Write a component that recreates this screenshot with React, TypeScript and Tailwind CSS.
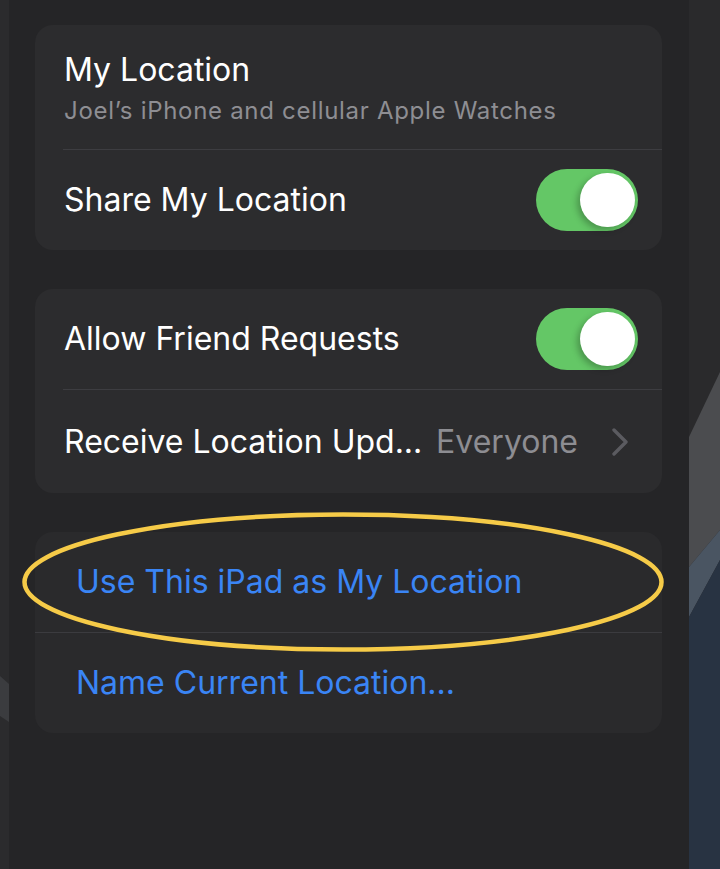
import React from "react";

function Toggle() {
  return (
    <div className="relative w-[102px] h-[62px] rounded-full bg-[#64c766] shrink-0">
      <div className="absolute right-[3px] top-[4px] w-[55px] h-[54px] rounded-full bg-white shadow-[-3px_3px_6px_rgba(0,0,0,0.25)]" />
    </div>
  );
}

function Chevron() {
  return (
    <svg width="18" height="28" viewBox="0 0 18 28" className="shrink-0">
      <path d="M3 2 L15 14 L3 26" fill="none" stroke="#5b5b60" strokeWidth="3.4" strokeLinecap="round" strokeLinejoin="round" />
    </svg>
  );
}

export default function App() {
  const font = { fontFamily: "Inter, 'Noto Sans', sans-serif" };
  return (
    <div className="flex w-[720px] h-[869px] overflow-hidden bg-[#2a2a2c]" style={font}>
      <div className="w-[9px] shrink-0 h-full">
        <svg width="9" height="869" viewBox="0 0 9 869" className="block">
          <rect width="9" height="869" fill="#2b2b2d" />
          <polygon points="0,676 9,684 9,722 0,716" fill="#3b3c3f" />
        </svg>
      </div>
      <div className="w-[680px] shrink-0 h-full bg-[#252527] pt-[25px] pl-[26px] pr-[27px] flex flex-col gap-[39px]">
        {/* Card 1 */}
        <div className="rounded-[18px] bg-[#2c2c2e] flex flex-col">
          <div className="h-[124px] pl-[29px] pt-[25px] flex flex-col">
            <div className="text-[32px] leading-[40px] text-white">My Location</div>
            <div className="mt-[6px] text-[24px] leading-[30px] text-[#8e8e93] tracking-[0.7px]">Joel’s iPhone and cellular Apple Watches</div>
          </div>
          <div className="ml-[28px] h-px bg-[#3d3d41]" />
          <div className="h-[100px] pl-[1px] pr-[24px] ml-[28px] flex items-center justify-between">
            <span className="text-[32px] text-white">Share My Location</span>
            <Toggle />
          </div>
        </div>
        {/* Card 2 */}
        <div className="rounded-[18px] bg-[#2c2c2e] flex flex-col">
          <div className="h-[100px] pl-[29px] pr-[24px] flex items-center justify-between">
            <span className="text-[32px] text-white">Allow Friend Requests</span>
            <Toggle />
          </div>
          <div className="ml-[28px] h-px bg-[#3d3d41]" />
          <div className="h-[103px] pl-[29px] pr-[33px] flex items-center">
            <span className="text-[32px] text-white">Receive Location Upd...</span>
            <span className="ml-auto text-[32px] text-[#8d8d92]">Everyone</span>
            <span className="ml-[33px] flex items-center"><Chevron /></span>
          </div>
        </div>
        {/* Card 3 */}
        <div className="relative rounded-[18px] bg-[#2a2a2c] flex flex-col">
          <div className="h-[100px] pl-[41px] flex items-center">
            <span className="text-[32px] text-[#3a85f5]">Use This iPad as My Location</span>
          </div>
          <div className="h-px bg-[#3b3b3f]" />
          <div className="h-[100px] pl-[41px] flex items-center">
            <span className="text-[32px] text-[#3a85f5]">Name Current Location...</span>
          </div>
          <svg className="absolute left-[-13px] top-[-20px] pointer-events-none" width="642" height="140" viewBox="0 0 642 140">
            <ellipse cx="321" cy="70" rx="318.5" ry="67.5" fill="none" stroke="#f6cb48" strokeWidth="4.5" />
          </svg>
        </div>
      </div>
      <div className="flex-1 h-full">
        <svg width="31" height="869" viewBox="0 0 31 869" className="block">
          <rect width="31" height="869" fill="#2a2a2c" />
          <polygon points="0,437 31,372 31,530 0,567" fill="#4b4c4f" />
          <polygon points="0,567 31,530 31,560 0,617" fill="#4a5562" />
          <polygon points="0,617 31,560 31,869 0,869" fill="#283342" />
        </svg>
      </div>
    </div>
  );
}
